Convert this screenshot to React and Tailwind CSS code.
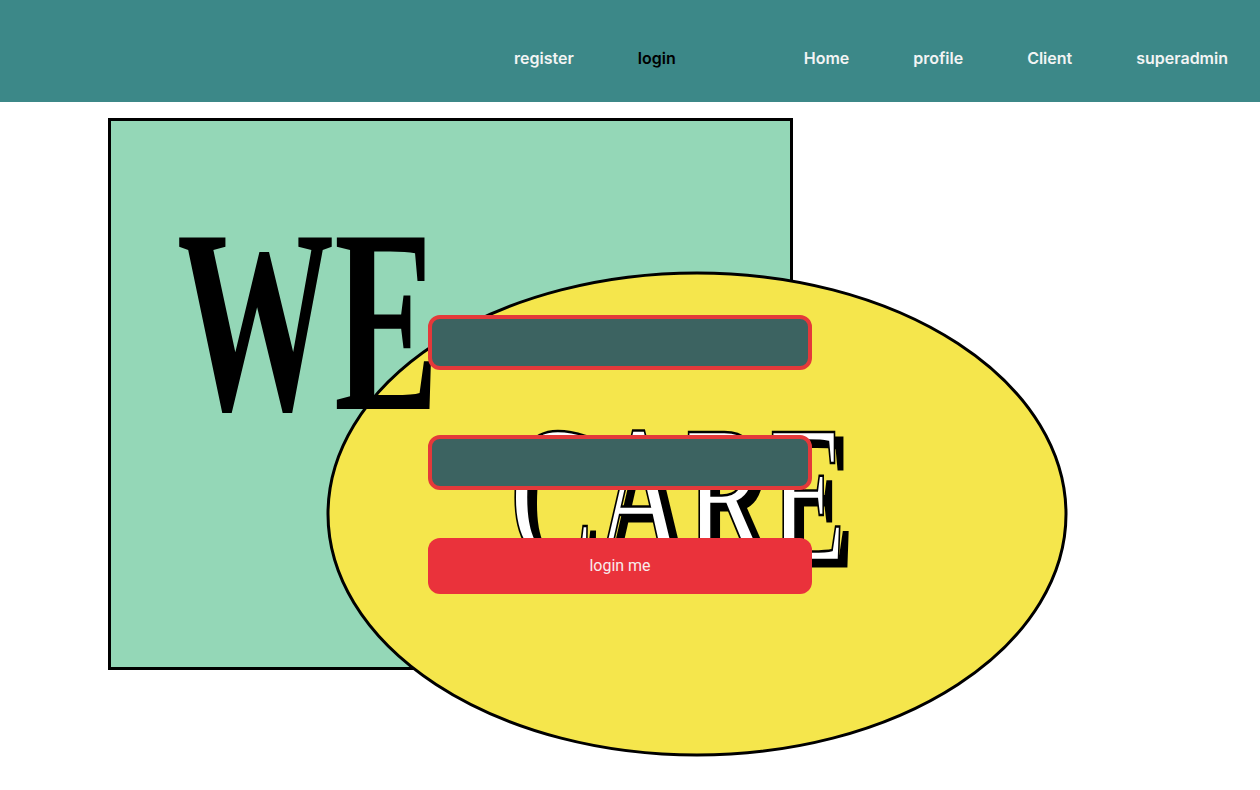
import React from 'react'

const LINKS_LEFT = ["register", "login"];
const LINKS_RIGHT = ["Home", "profile", "Client", "superadmin"];

function WeCareLogo() {
    return (
        <svg className="absolute left-0 top-0" width="1260" height="688" viewBox="0 0 1260 688">
            <rect x="109.5" y="17.5" width="682" height="549" fill="#94d7b7" stroke="#000" strokeWidth="3" />
            <ellipse cx="697" cy="412" rx="369" ry="241" fill="#f5e64c" stroke="#000" strokeWidth="3" />
            <text
                x="177" y="307" fontSize="262" fontWeight="700"
                fontFamily="'Liberation Serif', serif" fill="#000"
                textLength="262" lengthAdjust="spacingAndGlyphs"
            >WE</text>
            {/* CARE: black extrusion under white outlined letters */}
            <text
                x="518" y="464" fontSize="196"
                fontFamily="'Liberation Serif', serif" fill="#000" stroke="#000" strokeWidth="3"
                textLength="336" lengthAdjust="spacingAndGlyphs"
            >CARE</text>
            <text
                x="510" y="458" fontSize="196"
                fontFamily="'Liberation Serif', serif" fill="#fff" stroke="#000" strokeWidth="2.5"
                textLength="336" lengthAdjust="spacingAndGlyphs"
            >CARE</text>
        </svg>
    );
}

export default function App() {
    return (
        <div className="w-[1260px] h-[790px] bg-white overflow-hidden" style={{ fontFamily: "Roboto, 'Liberation Sans', sans-serif" }}>

            {/* Navbar */}
            <nav className="h-[102px] bg-[#3c8888] flex items-center justify-end pt-[13px] font-['Inter',sans-serif]">
                {LINKS_LEFT.map((l) => (
                    <a key={l} className={`px-8 text-base font-semibold ${l === "login" ? "text-black" : "text-[#f2f4f4]"}`}>{l}</a>
                ))}
                <div className="w-16" />
                {LINKS_RIGHT.map((l) => (
                    <a key={l} className="px-8 text-base font-semibold text-[#f2f4f4]">{l}</a>
                ))}
            </nav>

            {/* Login */}
            <main className="relative h-[688px]">
                <WeCareLogo />
                <form className="relative flex flex-col pl-[428px] pt-[213px] w-[811px]">
                    <input className="w-[384px] h-[55px] rounded-xl border-4 border-[#e4393a] bg-[#3c6361] outline-none" />
                    <input type="password" className="mt-[65px] w-[384px] h-[55px] rounded-xl border-4 border-[#e4393a] bg-[#3c6361] outline-none" />
                    <button type="button" className="mt-[48px] w-[384px] h-[56px] rounded-xl bg-[#ea323b] text-[#f8ecec] text-base">
                        login me
                    </button>
                </form>
            </main>
        </div>
    );
}
